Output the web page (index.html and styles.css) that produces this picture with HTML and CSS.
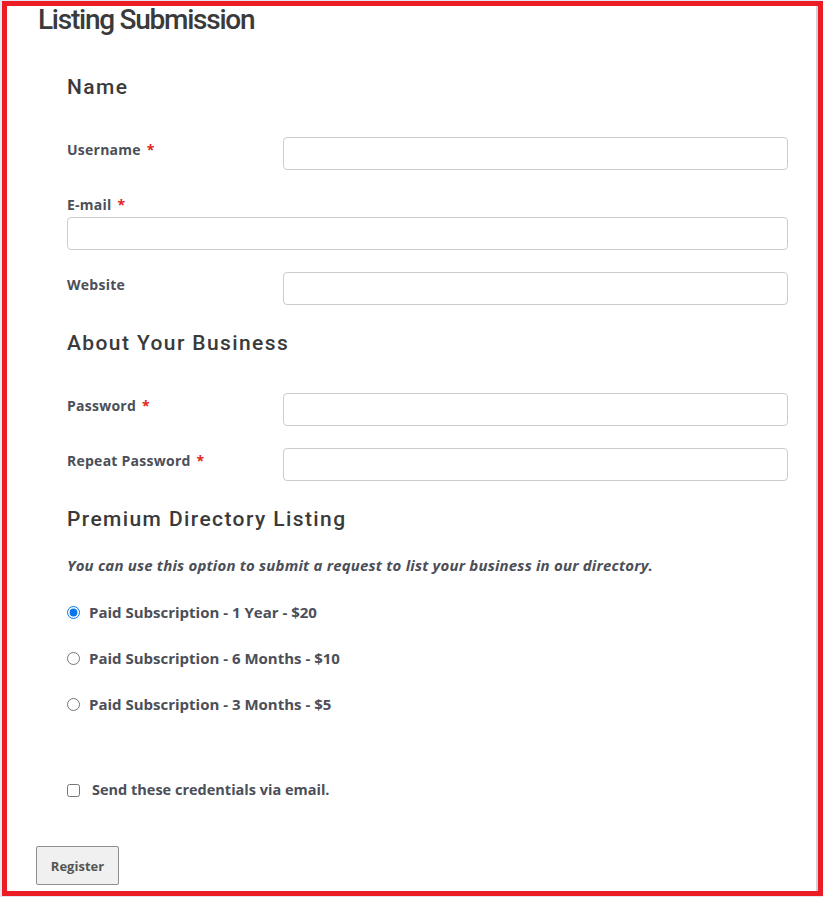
FILE: index.html
```html
<!DOCTYPE html>
<html>
<head>
<meta charset="utf-8">
<link rel="stylesheet" href="styles.css">
</head>
<body>
<div class="frame">
  <div class="page">
    <h1 class="title">Listing Submission</h1>
    <form class="form">
      <h2 class="section">Name</h2>
      <div class="row row-first">
        <label class="label">Username <span class="req">*</span></label>
        <input class="input" type="text">
      </div>
      <div class="stack">
        <label class="label">E-mail <span class="req">*</span></label>
        <input class="input" type="text">
      </div>
      <div class="row row-web">
        <label class="label">Website</label>
        <input class="input" type="text">
      </div>
      <h2 class="section section-about">About Your Business</h2>
      <div class="row row-first">
        <label class="label">Password <span class="req">*</span></label>
        <input class="input" type="password">
      </div>
      <div class="row row-repeat">
        <label class="label">Repeat Password <span class="req">*</span></label>
        <input class="input" type="password">
      </div>
      <h2 class="section section-premium">Premium Directory Listing</h2>
      <p class="note">You can use this option to submit a request to list your business in our directory.</p>
      <div class="options">
        <label class="option"><input type="radio" name="sub" checked> <span>Paid Subscription - 1 Year - $20</span></label>
        <label class="option"><input type="radio" name="sub"> <span>Paid Subscription - 6 Months - $10</span></label>
        <label class="option"><input type="radio" name="sub"> <span>Paid Subscription - 3 Months - $5</span></label>
      </div>
      <label class="check"><input type="checkbox"> <span>Send these credentials via email.</span></label>
    </form>
    <button class="btn" type="button">Register</button>
  </div>
</div>
</body>
</html>
```
FILE: styles.css
```css
html, body {
  margin: 0;
  padding: 0;
}
body {
  background: #e4e6f2;
  width: 823px;
  height: 897px;
  overflow: hidden;
  font-family: "Open Sans", "Liberation Sans", sans-serif;
  color: #4b4f58;
}
.frame {
  box-sizing: border-box;
  margin: 1px 0 0 2px;
  width: 821px;
  height: 895px;
  border: 5px solid #ec1c24;
  background: #ffffff;
  overflow: hidden;
}
.page {
  box-sizing: border-box;
  height: 100%;
  border-right: 2px solid #cfd2da;
  padding-left: 31px;
}
.title {
  margin: 0;
  padding-top: 0;
  font-family: "Roboto", sans-serif;
  font-weight: 500;
  font-size: 28px;
  line-height: 28px;
  color: #3a3a3a;
  letter-spacing: -1.25px;
}
.form {
  padding-left: 29px;
  width: 721px;
}
.section {
  margin: 0;
  font-family: "Roboto", sans-serif;
  font-weight: 500;
  font-size: 21px;
  line-height: 26px;
  color: #3a3a3a;
  letter-spacing: 1.4px;
}
.form > .section:first-child {
  margin-top: 40px;
}
.row {
  display: grid;
  grid-template-columns: 216px 1fr;
  align-items: start;
}
.row-first { margin-top: 37px; }
.row-web { margin-top: 22px; }
.row-repeat { margin-top: 22px; }
.label {
  display: block;
  font-size: 14px;
  line-height: 20px;
  font-weight: 700;
  color: #4b4f58;
  padding-top: 3px;
  letter-spacing: 0.25px;
}
.req {
  color: #e2231a;
  margin-left: 2px;
}
.input {
  box-sizing: border-box;
  width: 100%;
  height: 33px;
  margin: 0;
  border: 1px solid #cccccc;
  border-radius: 4px;
  background: #fff;
  font: inherit;
}
.stack {
  margin-top: 25px;
}
.stack .label {
  padding-top: 0;
  padding-bottom: 2px;
}
.section-about { margin-top: 25px; }
.section-premium { margin-top: 25px; }
.note {
  margin: 23px 0 0;
  font-size: 15px;
  line-height: 20px;
  font-weight: 700;
  font-style: italic;
  color: #4b4f58;
  letter-spacing: 0.18px;
}
.options {
  margin-top: 27px;
  display: flex;
  flex-direction: column;
  gap: 26px;
}
.option, .check {
  display: flex;
  align-items: center;
  font-size: 15px;
  line-height: 20px;
  font-weight: 700;
  color: #4b4f58;
}
.check {
  font-size: 14.5px;
  margin-top: 66px;
}
.option input {
  margin: 0 9px 0 0;
  width: 13px;
  height: 13px;
  accent-color: #0a74e8;
}
.check input {
  margin: 0 12px 0 0;
  width: 13px;
  height: 13px;
}
.btn {
  display: block;
  margin-top: 46px;
  margin-left: -2px;
  width: 83px;
  height: 39px;
  background: #f0f0f0;
  border: 1px solid #8f8f8f;
  border-radius: 2px;
  font-family: "Open Sans", sans-serif;
  font-weight: 700;
  font-size: 13px;
  color: #555;
}
```
